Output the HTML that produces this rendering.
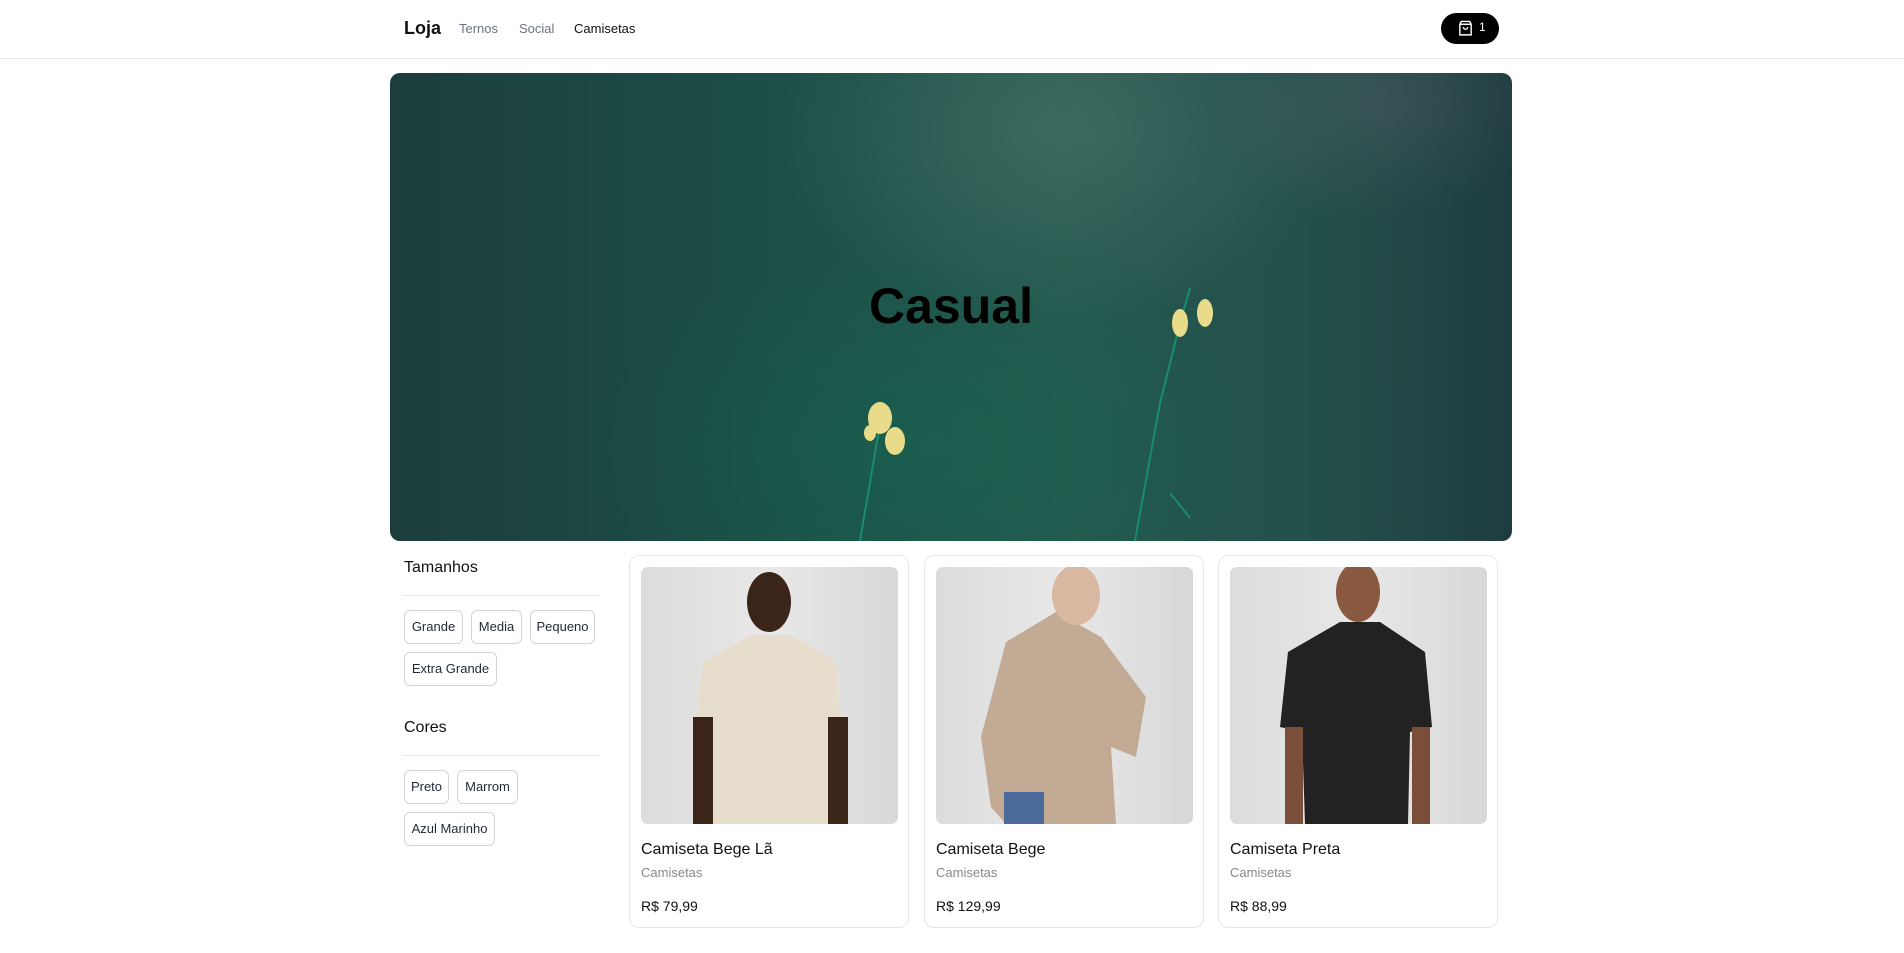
<!DOCTYPE html>
<html><head><meta charset="utf-8"><style>
*{box-sizing:border-box;margin:0;padding:0}
body{width:1904px;height:953px;background:#fff;font-family:"Liberation Sans",sans-serif;color:#111;position:relative;overflow:hidden}
.hdr{position:absolute;left:0;top:0;width:1904px;height:59px;border-bottom:1px solid #e5e7eb}
.abs{position:absolute;white-space:nowrap}
.hero{position:absolute;left:390px;top:73px;width:1122px;height:468px;border-radius:10px;overflow:hidden;
background:
radial-gradient(ellipse 380px 260px at 60% 12%,rgba(90,125,115,.45),transparent 75%),
radial-gradient(ellipse 220px 160px at 88% 6%,rgba(90,95,105,.4),transparent 75%),
radial-gradient(ellipse 450px 260px at 48% 80%,rgba(15,105,80,.45),transparent 75%),
linear-gradient(90deg,#1c3d3c 0%,#1d5048 35%,#25594f 60%,#234e4a 85%,#1e3c3f 100%)}
.btn{position:absolute;height:34px;border:1px solid #d4d4d8;border-radius:6px;font-size:13px;line-height:32px;text-align:center;color:#1f2937}
.sep{position:absolute;left:404px;width:196px;height:1px;background:#e5e7eb}
.card{position:absolute;top:555px;width:280px;height:373px;border:1px solid #e5e7eb;border-radius:10px}
.img{position:absolute;left:11px;top:11px;width:257px;height:257px;border-radius:7px;overflow:hidden;background:linear-gradient(90deg,#dcdcdc,#e8e8e8 50%,#d8d8d8)}
.t{position:absolute;left:11px;top:285px;font-size:16px}
.c{position:absolute;left:11px;top:309px;font-size:13px;color:#888}
.p{position:absolute;left:11px;top:342px;font-size:14px}
</style></head><body>
<div class="hdr"></div>
<div class="abs" style="left:404px;top:18px;font-size:18px;font-weight:bold">Loja</div>
<div class="abs" style="left:459px;top:21px;font-size:13px;color:#6b7280">Ternos</div>
<div class="abs" style="left:519px;top:21px;font-size:13px;color:#6b7280">Social</div>
<div class="abs" style="left:574px;top:21px;font-size:13px;color:#111">Camisetas</div>
<div class="abs" style="left:1441px;top:13px;width:58px;height:31px;border-radius:16px;background:#000">
<svg style="position:absolute;left:16px;top:7px" width="17" height="17" viewBox="0 0 24 24" fill="none" stroke="#fff" stroke-width="2"><path d="M6 2h12l2 4v15H4V6z"/><path d="M4 6h16"/><path d="M9 10a3 3 0 0 0 6 0"/></svg>
<span style="position:absolute;left:38px;top:7px;color:#fff;font-size:12px">1</span></div>
<div class="hero">
<svg width="1122" height="468" style="position:absolute;left:0;top:0">
<g stroke="#1a8a70" stroke-width="2" fill="none"><path d="M470 468 L485 380 L492 340"/><path d="M745 468 L770 330 L790 250 L800 215"/><path d="M780 420 L800 445"/></g>
<g fill="#e8dc8a"><ellipse cx="490" cy="345" rx="12" ry="16"/><ellipse cx="505" cy="368" rx="10" ry="14"/><ellipse cx="480" cy="360" rx="6" ry="8"/><ellipse cx="790" cy="250" rx="8" ry="14"/><ellipse cx="815" cy="240" rx="8" ry="14"/></g>
</svg>
<div class="abs" style="left:0;width:1122px;text-align:center;top:204px;font-size:50px;font-weight:bold;color:#000">Casual</div>
</div>
<div class="abs" style="left:404px;top:559px;font-size:16px">Tamanhos</div>
<div class="sep" style="top:595px"></div>
<div class="btn" style="left:404px;top:610px;width:59px">Grande</div>
<div class="btn" style="left:471px;top:610px;width:51px">Media</div>
<div class="btn" style="left:530px;top:610px;width:65px">Pequeno</div>
<div class="btn" style="left:404px;top:652px;width:93px">Extra Grande</div>
<div class="abs" style="left:404px;top:719px;font-size:16px">Cores</div>
<div class="sep" style="top:755px"></div>
<div class="btn" style="left:404px;top:770px;width:45px">Preto</div>
<div class="btn" style="left:457px;top:770px;width:61px">Marrom</div>
<div class="btn" style="left:404px;top:812px;width:91px">Azul Marinho</div>

<div class="card" style="left:629px"><div class="img">
<svg width="257" height="257"><path d="M60 257 L55 150 L62 95 L110 68 L150 68 L195 95 L200 150 L192 257Z" fill="#e6ddcc"/><rect x="52" y="150" width="20" height="107" fill="#3b2418"/><rect x="187" y="150" width="20" height="107" fill="#3b2418"/><ellipse cx="128" cy="35" rx="22" ry="30" fill="#3b2418"/></svg></div>
<div class="t">Camiseta Bege Lã</div><div class="c">Camisetas</div><div class="p">R$ 79,99</div></div>
<div class="card" style="left:924px"><div class="img">
<svg width="257" height="257"><path d="M55 240 L45 170 L70 75 L120 45 L165 70 L210 130 L200 190 L175 180 L180 257 L70 257Z" fill="#c2aa95"/><rect x="68" y="225" width="40" height="32" fill="#4a6a9a"/><ellipse cx="140" cy="28" rx="24" ry="30" fill="#d8b8a0"/></svg></div>
<div class="t">Camiseta Bege</div><div class="c">Camisetas</div><div class="p">R$ 129,99</div></div>
<div class="card" style="left:1218px"><div class="img">
<svg width="257" height="257"><path d="M50 160 L58 85 L110 55 L150 55 L195 85 L202 160 L180 165 L178 257 L75 257 L72 165Z" fill="#222"/><rect x="55" y="160" width="18" height="97" fill="#7a4e38"/><rect x="182" y="160" width="18" height="97" fill="#7a4e38"/><ellipse cx="128" cy="25" rx="22" ry="30" fill="#8a5a40"/></svg></div>
<div class="t">Camiseta Preta</div><div class="c">Camisetas</div><div class="p">R$ 88,99</div></div>
</body></html>
